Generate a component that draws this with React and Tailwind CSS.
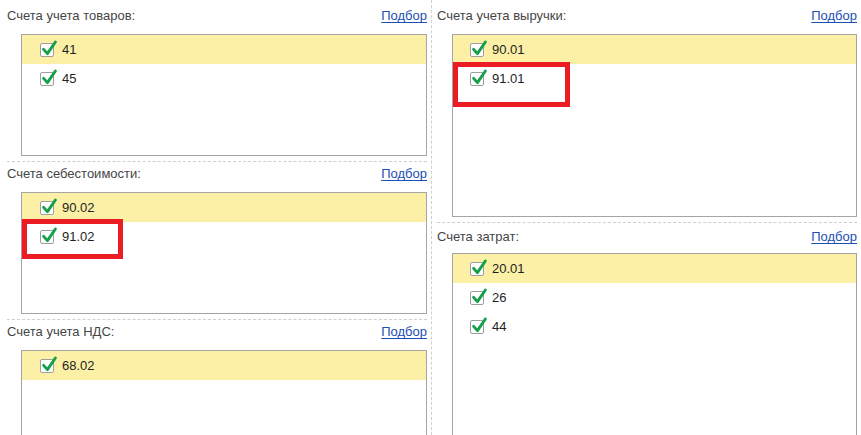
import React from "react";

const Check = () => (
  <span className="relative inline-block w-[14px] h-[14px] border border-[#9e9e9e] rounded-[2px] bg-white shrink-0">
    <svg className="absolute left-[-1px] top-[-5px]" width="19" height="19" viewBox="0 0 19 19">
      <path d="M3.6 10.4 L7.4 14.6 L15.4 3" fill="none" stroke="#14a04a" strokeWidth="2.9" strokeLinecap="round" strokeLinejoin="round" />
    </svg>
  </span>
);

const Row = ({ v, hl, pl }) => (
  <div className={`flex items-center h-[29px] ${pl} ${hl ? "bg-[#fbf0a6]" : "bg-white"}`}>
    <Check />
    <span className="ml-[8px] text-[13px] text-[#1f1f1f]">{v}</span>
  </div>
);

const Section = ({ label, rows, boxH, first, boxMl, rowPl, pt, mt = "mt-[9px]" }) => (
  <div className={first ? "pt-[7px] pb-[5px]" : `${pt} pb-[5px] border-t border-dashed border-[#cfcfcf]`}>
    <div className="flex items-center justify-between h-[18px]">
      <span className="text-[13px] text-[#454545]">{label}</span>
      <span className="text-[13px] text-[#1c4fb4] underline underline-offset-2">Подбор</span>
    </div>
    <div className={`${mt} ${boxMl} ${boxH} border border-[#a5a5a5] bg-white overflow-hidden`}>
      {rows.map((r, i) => (
        <Row key={r} v={r} hl={i === 0} pl={rowPl} />
      ))}
    </div>
  </div>
);

export default function App() {
  return (
    <div className="relative w-[861px] h-[435px] overflow-hidden bg-white font-['Liberation_Sans',Arial,sans-serif]">
      <div className="flex h-full">
        <div className="w-[432px] shrink-0 pl-[7px] pr-[4px] border-r border-dashed border-[#cfcfcf]">
          <Section first label="Счета учета товаров:" rows={["41", "45"]} boxH="h-[122px]" boxMl="ml-[14px]" rowPl="pl-[18px]" />
          <Section pt="pt-[3px]" label="Счета себестоимости:" rows={["90.02", "91.02"]} boxH="h-[122px]" boxMl="ml-[14px]" rowPl="pl-[18px]" />
          <Section pt="pt-[3px]" label="Счета учета НДС:" rows={["68.02"]} boxH="h-[200px]" boxMl="ml-[14px]" rowPl="pl-[18px]" />
        </div>
        <div className="flex-1 pl-[5px] pr-[4px]">
          <Section first label="Счета учета выручки:" rows={["90.01", "91.01"]} boxH="h-[183px]" boxMl="ml-[15px]" rowPl="pl-[17px]" />
          <Section pt="pt-[5px]" mt="mt-[7px]" label="Счета затрат:" rows={["20.01", "26", "44"]} boxH="h-[300px]" boxMl="ml-[15px]" rowPl="pl-[17px]" />
        </div>
      </div>
      <div className="absolute left-[22px] top-[219px] w-[101px] h-[40px] border-[5px] border-[#ec1c24]" />
      <div className="absolute left-[453px] top-[62px] w-[117px] h-[45px] border-[5px] border-[#ec1c24]" />
    </div>
  );
}
